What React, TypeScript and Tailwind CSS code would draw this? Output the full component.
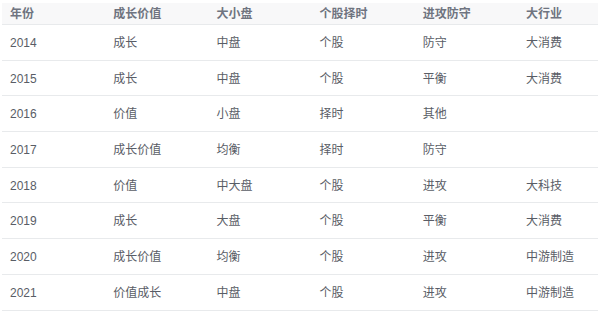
import React from 'react';

const headers = ['年份', '成长价值', '大小盘', '个股择时', '进攻防守', '大行业'];

const rows = [
  ['2014', '成长', '中盘', '个股', '防守', '大消费'],
  ['2015', '成长', '中盘', '个股', '平衡', '大消费'],
  ['2016', '价值', '小盘', '择时', '其他', ''],
  ['2017', '成长价值', '均衡', '择时', '防守', ''],
  ['2018', '价值', '中大盘', '个股', '进攻', '大科技'],
  ['2019', '成长', '大盘', '个股', '平衡', '大消费'],
  ['2020', '成长价值', '均衡', '个股', '进攻', '中游制造'],
  ['2021', '价值成长', '中盘', '个股', '进攻', '中游制造'],
];

const cols = 'grid grid-cols-[103.2px_103.2px_103.2px_103.2px_103.2px_1fr]';

export default function App() {
  return (
    <div
      className="w-[600px] h-[312px] bg-white pt-[3px] px-[2px] overflow-hidden text-[12px] text-[#595d66]"
      style={{ fontFamily: '"Liberation Sans", "Noto Sans CJK SC", sans-serif' }}
    >
      <div className={`${cols} h-[22px] items-center bg-[#f8f8f9] border-b border-[#e8eaec] font-bold text-[#6f7480]`}>
        {headers.map((h) => (
          <div key={h} className="pl-[8px]">{h}</div>
        ))}
      </div>
      {rows.map((r) => (
        <div key={r[0]} className={`${cols} h-[35.7px] items-center border-b border-[#e8eaec] pt-[1px]`}>
          {r.map((c, i) => (
            <div key={i} className="pl-[8px]">{c}</div>
          ))}
        </div>
      ))}
    </div>
  );
}
